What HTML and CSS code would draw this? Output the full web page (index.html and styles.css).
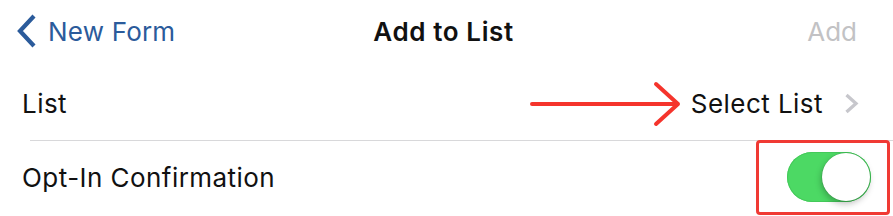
FILE: index.html
```html
<!DOCTYPE html>
<html>
<head>
<meta charset="utf-8">
<link rel="stylesheet" href="styles.css">
</head>
<body>
<div class="screen">
  <header class="nav">
    <div class="nav-left">
      <svg class="back" width="22" height="36" viewBox="0 0 22 36"><path d="M19 3 L5 18 L19 33" fill="none" stroke="#2b5b9b" stroke-width="4.2" stroke-linecap="butt" stroke-linejoin="miter"/></svg>
      <span class="back-label">New Form</span>
    </div>
    <div class="nav-title">Add to List</div>
    <div class="nav-right">Add</div>
  </header>
  <div class="row row-sep">
    <span class="label">List</span>
    <span class="value">Select List</span>
    <svg class="chev" width="15" height="21" viewBox="0 0 15 21"><path d="M2.5 2 L12 10.5 L2.5 19" fill="none" stroke="#c7c7cc" stroke-width="3.3"/></svg>
  </div>
  <div class="row row-last">
    <span class="label">Opt-In Confirmation</span>
    <div class="toggle"><div class="knob"></div></div>
  </div>
  <svg class="arrow" width="160" height="46" viewBox="0 0 160 46"><path d="M2 23 H148 M126 3 L148 23 L126 43" fill="none" stroke="#f5342c" stroke-width="4" stroke-linecap="round" stroke-linejoin="round"/></svg>
  <div class="highlight"></div>
</div>
</body>
</html>
```
FILE: styles.css
```css
html, body { margin: 0; padding: 0; background: #ffffff; }
body { font-family: Inter, "Liberation Sans", Arial, sans-serif; }
.screen { position: relative; width: 893px; height: 216px; overflow: hidden; background: #fff; }
.nav { height: 62px; padding-bottom: 4px; background: #fff; display: grid; grid-template-columns: 1fr auto 1fr; align-items: center; }
.nav-left { display: flex; align-items: center; padding-left: 15px; gap: 11px; color: #2b5b9b; }
.back { display: block; }
.back-label { font-size: 26px; color: #2b5b9b; letter-spacing: 0.2px; }
.nav-title { font-size: 26px; font-weight: 600; color: #111; letter-spacing: 0.6px; margin-left: -6px; }
.nav-right { justify-self: end; padding-right: 36px; font-size: 26px; color: #c2c2c4; }
.row { height: 74px; display: flex; align-items: center; padding-left: 22px; padding-right: 35px; }
.row-last { height: 72px; }
.row-sep { border-bottom: 1px solid #d8d8da; margin-left: 30px; padding-left: 0; padding-right: 34px; position: relative; }
.row-sep .label { margin-left: -8px; }
.label { font-size: 26px; color: #111; flex: 1; letter-spacing: 0.45px; }
.value { font-size: 26px; color: #111; margin-right: 21px; letter-spacing: 0.45px; }
.chev { display: block; }
.toggle { width: 84px; height: 50px; border-radius: 25px; background: #4cd964; position: relative; margin-right: -13px; box-shadow: inset 0 0 0 1px #44c95a; }
.knob { position: absolute; right: 1px; top: 1px; width: 48px; height: 48px; border-radius: 50%; background: #fff; box-shadow: -1px 3px 6px rgba(0,0,0,0.25), 0 0 0 0.5px rgba(0,0,0,0.15); }
.arrow { position: absolute; left: 530px; top: 81px; }
.highlight { position: absolute; left: 756px; top: 140px; width: 128px; height: 69px; border: 3px solid #f03a34; border-radius: 4px; }
```
